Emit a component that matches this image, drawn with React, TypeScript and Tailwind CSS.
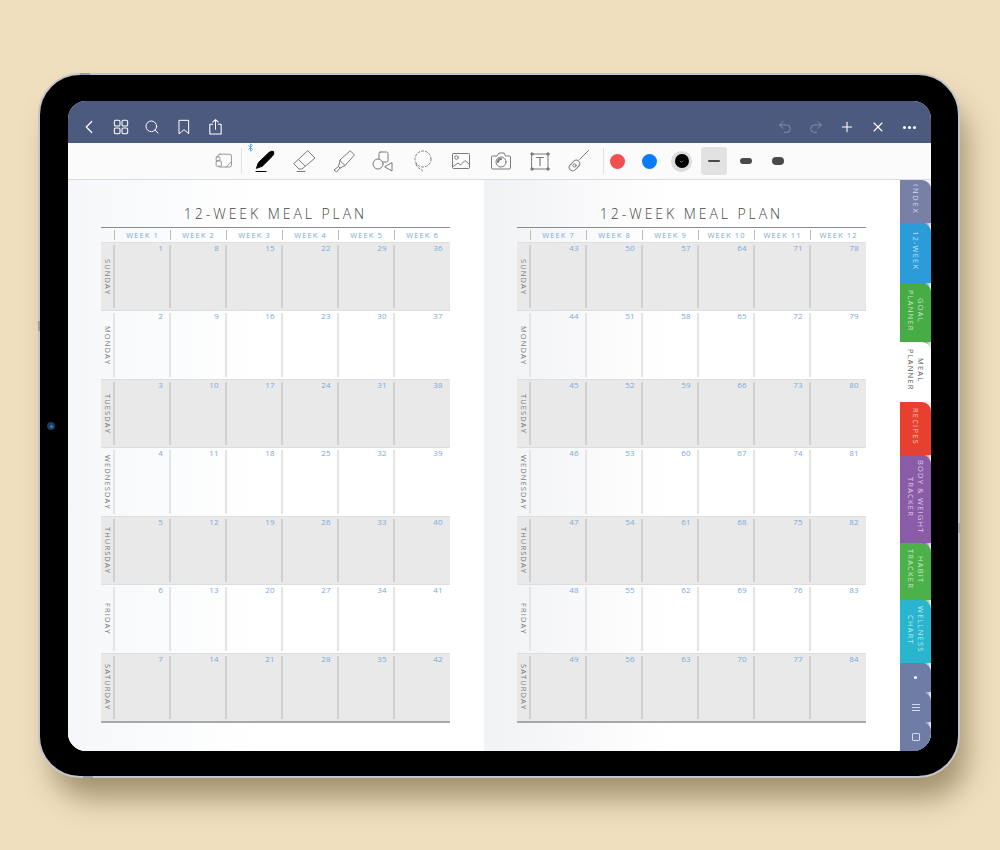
import type { ReactNode } from "react";
import { ChevronLeft, Search, Plus, X, Undo2, Redo2, Bluetooth } from "lucide-react";

const DAYS = ["SUNDAY", "MONDAY", "TUESDAY", "WEDNESDAY", "THURSDAY", "FRIDAY", "SATURDAY"];

const Ico = ({ children, className }: { children: ReactNode; className?: string }) => (
  <svg
    viewBox="0 0 24 24"
    fill="none"
    stroke="currentColor"
    strokeWidth="1"
    strokeLinecap="round"
    strokeLinejoin="round"
    className={className ?? "w-6 h-6"}
  >
    {children}
  </svg>
);

const Planner = ({ firstWeek, className }: { firstWeek: number; className: string }) => {
  const weeks = [0, 1, 2, 3, 4, 5].map((i) => firstWeek + i);
  return (
    <section className={className}>
      <h2 className="w-[349px] text-center text-[14px] leading-[20px] font-light tracking-[2.95px] text-[#444] font-['Open_Sans',sans-serif]">
        12-WEEK MEAL PLAN
      </h2>
      <div className="mt-[3px] w-[349px] border-t border-t-[#8c8c8c] border-b-2 border-b-[#a8a8a8] font-['Open_Sans',sans-serif]">
        {/* Week labels */}
        <div className="flex h-[14px] pl-[13px]">
          {weeks.map((w) => (
            <div key={w} className="w-[56px] h-full py-[2px]">
              <div className="h-full border-l border-l-[#bdbdbd] text-center text-[7.5px] leading-[10px] tracking-[1.1px] text-[#7aa9dc]">
                WEEK {w}
              </div>
            </div>
          ))}
        </div>
        {/* Day rows */}
        <div className="grid grid-rows-7 h-[479px]">
          {DAYS.map((day, d) => (
            <div
              key={day}
              className={`flex pl-[12px] relative border-t border-t-[#dedede] ${d % 2 === 0 ? "bg-[#e9e9e9]" : "bg-transparent"}`}
            >
              <div className="absolute left-0 top-0 bottom-0 w-[13px] flex items-center justify-center">
                <span className="[writing-mode:vertical-rl] text-[7.5px] leading-[10px] tracking-[1.1px] text-[#7a7a7a]">
                  {day}
                </span>
              </div>
              {weeks.map((w) => (
                <div key={w} className="w-[56px] py-[2px]">
                  <div
                    className={`h-full border-l-2 pr-[6px] text-right text-[8px] leading-[5px] tracking-[0.3px] text-[#7aa9dc] ${d % 2 === 0 ? "border-l-[#d0d0d0]" : "border-l-[#e4e4e4]"}`}
                  >
                    {(w - 1) * 7 + d + 1}
                  </div>
                </div>
              ))}
            </div>
          ))}
        </div>
      </div>
    </section>
  );
};

const TABS = [
  { label: ["INDEX"], h: "h-[43px]", bg: "bg-[#7880a8]", text: "text-[#d5d8e6] tracking-[1.8px]", prev: "from-white" },
  { label: ["12-WEEK"], h: "h-[60px]", bg: "bg-[#2b9cd8]", text: "text-[#bfe3f5]", prev: "from-[#7880a8]" },
  { label: ["GOAL", "PLANNER"], h: "h-[59px]", bg: "bg-[#47ab46]", text: "text-[#c6e8c5]", prev: "from-[#2b9cd8]" },
  { label: ["MEAL", "PLANNER"], h: "h-[60px]", bg: "bg-white", text: "text-[#555]", prev: "from-[#47ab46]" },
  { label: ["RECIPES"], h: "h-[53px]", bg: "bg-[#e8402f]", text: "text-[#f8c6bf]", prev: "from-white" },
  { label: ["BODY & WEIGHT", "TRACKER"], h: "h-[88px]", bg: "bg-[#8a5ca8]", text: "text-[#dccbe6]", prev: "from-[#e8402f]" },
  { label: ["HABIT", "TRACKER"], h: "h-[57px]", bg: "bg-[#4cb14a]", text: "text-[#c9eac8]", prev: "from-[#8a5ca8]" },
  { label: ["WELLNESS", "CHART"], h: "h-[63px]", bg: "bg-[#2ab5cf]", text: "text-[#bfeaf2]", prev: "from-[#4cb14a]" },
];

// Each tab sits on the one above it: the rounded corner shows the previous colour, fading pale at the edge
const TabShell = ({ h, bg, prev, children }: { h: string; bg: string; prev: string; children: ReactNode }) => (
  <div className={`w-[31px] bg-gradient-to-r ${prev} from-[78%] to-[#f0f0f0] ${h}`}>
    <div className={`h-full flex items-center justify-center rounded-tr-[9px] ${bg}`}>{children}</div>
  </div>
);

export default function App() {
  return (
    <div className="w-[1000px] h-[850px] bg-[#efdfbf] pl-[38px] pt-[73px] overflow-hidden">
      <div className="relative w-[922px] h-[705px] rounded-[42px] border-2 border-[#c3c5cc] bg-black pl-[28px] pt-[26px] shadow-[10px_24px_28px_-4px_rgba(90,70,30,0.5)]">
        {/* Camera and side buttons */}
        <div className="absolute left-[7px] top-[347px] w-[8px] h-[8px] rounded-full bg-[#1c3d60] flex items-center justify-center">
          <div className="w-[3px] h-[3px] rounded-full bg-[#3d7ab0]" />
        </div>
        <div className="absolute -left-[2px] top-[246px] w-[2px] h-[10px] bg-[#9a9ca3]" />
        <div className="absolute -right-[2px] top-[448px] w-[2px] h-[10px] bg-[#a5a7ae]" />
        <div className="absolute left-[40px] -top-[2px] w-[10px] h-[2px] bg-[#9a9ca3]" />
        <div className="absolute left-[43px] -bottom-[2px] w-[10px] h-[2px] bg-[#9a9ca3]" />

        <div className="w-[863px] h-[650px] rounded-[18px] overflow-hidden bg-white">
          {/* Nav bar */}
          <header className="h-[42px] bg-[#4d5a80] flex items-center text-white pt-[10px]">
            <ChevronLeft className="ml-[10px] w-[22px] h-[22px]" strokeWidth={1.3} />
            <Ico className="ml-[13px] w-[16px] h-[16px]">
              <rect x="2" y="2" width="8.5" height="8.5" rx="2" strokeWidth="1.6" />
              <rect x="13.5" y="2" width="8.5" height="8.5" rx="2" strokeWidth="1.6" />
              <rect x="2" y="13.5" width="8.5" height="8.5" rx="2" strokeWidth="1.6" />
              <rect x="13.5" y="13.5" width="8.5" height="8.5" rx="2" strokeWidth="1.6" />
            </Ico>
            <Search className="ml-[15px] w-[16px] h-[16px]" strokeWidth={1.5} />
            <Ico className="ml-[16px] w-[16px] h-[18px]">
              <path d="M5 2 H19 V22 L12 16 L5 22 Z" strokeWidth="1.5" />
            </Ico>
            <Ico className="ml-[15px] w-[17px] h-[18px]">
              <path d="M8 8 H4 V22 H20 V8 H16 M12 15 V1.5 M8 5 L12 1.5 L16 5" strokeWidth="1.5" />
            </Ico>
            <div className="ml-auto flex items-center mr-[14px] gap-[15px]">
              <Undo2 className="w-[16px] h-[16px] text-[#8b95b0]" strokeWidth={1.3} />
              <Redo2 className="w-[16px] h-[16px] text-[#8b95b0]" strokeWidth={1.3} />
              <Plus className="w-[16px] h-[16px]" strokeWidth={1.6} />
              <X className="w-[16px] h-[16px]" strokeWidth={1.6} />
              <div className="flex gap-[2px] w-[16px] justify-center">
                <span className="w-[3px] h-[3px] rounded-full bg-white" />
                <span className="w-[3px] h-[3px] rounded-full bg-white" />
                <span className="w-[3px] h-[3px] rounded-full bg-white" />
              </div>
            </div>
          </header>

          {/* Tool bar */}
          <div className="h-[37px] bg-[#fbfbfb] border-b border-b-[#dcdcdc] flex items-center text-[#7b7b7b] pl-[147px]">
            <Ico className="w-[18px] h-[18px]">
              <rect x="4" y="3" width="18" height="17" rx="2.5" />
              <rect x="1.5" y="6.5" width="5" height="5.5" rx="1" fill="#fbfbfb" />
              <rect x="1.5" y="12" width="7" height="7" rx="1" fill="#fbfbfb" />
              <path d="M15 20 L22 13" />
            </Ico>
            <div className="ml-[8px] w-px h-[26px] bg-[#e2e2e2]" />
            <div className="relative ml-[10px] w-[24px] h-[24px] text-black">
              <Bluetooth className="absolute -left-[6px] -top-[6px] w-[9px] h-[9px] text-[#3d8fd9]" strokeWidth={2} />
              <Ico>
                <path d="M4.5 19 L6.5 13.5 L17 3.5 Q19.5 1.5 21.5 2.5 Q22.5 4.5 20.5 7 L10.5 17 Z" fill="currentColor" />
                <path d="M4 22.5 H14" strokeWidth="1.2" />
              </Ico>
            </div>
            <div className="ml-[16px]">
              <Ico>
                <path d="M16 2 L23 9 L10 20 L7 20 L2 15 Z" />
                <path d="M6.5 10.5 L13 17" />
                <path d="M5 22.5 H13" />
              </Ico>
            </div>
            <div className="ml-[16px]">
              <Ico>
                <path d="M18.5 2 L22.5 6 L13 16.5 L8 11.5 Z" />
                <path d="M8 11.5 L6.5 17.5 L2 21 L4.5 23 L8 19 L13 16.5" />
                <path d="M6.5 17.5 L8 19" />
              </Ico>
            </div>
            <div className="ml-[14px]">
              <Ico>
                <rect x="9" y="3" width="9" height="10" rx="1.5" />
                <circle cx="8" cy="15" r="5" fill="#fbfbfb" />
                <path d="M22 14 V22 L15 18 Z" fill="#fbfbfb" />
              </Ico>
            </div>
            <div className="ml-[16px]">
              <Ico>
                <circle cx="13" cy="10" r="8" strokeDasharray="2 2" />
                <path d="M6 15 Q7 19 11 20 Q13 21 12 23" strokeDasharray="2 2" />
              </Ico>
            </div>
            <div className="ml-[15px]">
              <Ico>
                <rect x="3.5" y="4.5" width="17" height="15" rx="1" />
                <circle cx="7.5" cy="8.5" r="1.8" />
                <path d="M4 17.5 L9 14 L11.5 16 L16 11.5 L20 15" />
              </Ico>
            </div>
            <div className="ml-[16px]">
              <Ico>
                <path d="M3.5 20 Q2.5 20 2.5 19 V8 Q2.5 7 3.5 7 H8 L10 4 H15 L16.5 7 H20.5 Q21.5 7 21.5 8 V19 Q21.5 20 20.5 20 Z" />
                <circle cx="12" cy="13" r="5" />
                <path d="M9 13 Q9 10 12 10" strokeWidth="2" />
              </Ico>
            </div>
            <div className="ml-[15px]">
              <Ico>
                <rect x="4" y="5" width="16" height="15" />
                <circle cx="4" cy="5" r="1.2" fill="currentColor" />
                <circle cx="20" cy="5" r="1.2" fill="currentColor" />
                <circle cx="4" cy="20" r="1.2" fill="currentColor" />
                <circle cx="20" cy="20" r="1.2" fill="currentColor" />
                <path d="M8.5 8.5 H15.5 M12 8.5 V16.5" strokeWidth="1.2" />
              </Ico>
            </div>
            <div className="ml-[14px]">
              <Ico>
                <rect x="2.5" y="13" width="12" height="7" rx="3.5" transform="rotate(-45 8.5 16.5)" />
                <circle cx="8.5" cy="16.5" r="1.6" />
                <path d="M13.5 10.5 L22.5 1.5" />
              </Ico>
            </div>
            <div className="ml-[13px] w-px h-[26px] bg-[#e2e2e2]" />
            <div className="ml-[6px] w-[15px] h-[15px] rounded-full bg-[#f25050]" />
            <div className="ml-[17px] w-[15px] h-[15px] rounded-full bg-[#0a7cf5]" />
            <div className="ml-[14px] w-[21px] h-[21px] rounded-full bg-[#dcdcdc] flex items-center justify-center">
              <div className="w-[14px] h-[14px] rounded-full bg-black flex items-center justify-center">
                <svg viewBox="0 0 6 4" className="w-[5px] h-[3px]" fill="none" stroke="#bbb" strokeWidth="1">
                  <path d="M1 1 L3 3 L5 1" />
                </svg>
              </div>
            </div>
            <div className="ml-[9px] w-[26px] h-[28px] rounded-[3px] bg-[#e2e2e2] flex items-center justify-center">
              <div className="w-[12px] h-[2px] rounded-full bg-[#4a4a4a]" />
            </div>
            <div className="ml-[13px] w-[12px] h-[6px] rounded-full bg-[#4a4a4a]" />
            <div className="ml-[20px] w-[12px] h-[8px] rounded-full bg-[#4a4a4a]" />
          </div>

          {/* Pages and tabs */}
          <div className="flex h-[571px]">
            <Planner firstWeek={1} className="w-[416px] pl-[33px] pt-[24px] bg-gradient-to-r from-[#f5f7fa] to-white to-[45%]" />
            <Planner firstWeek={7} className="w-[416px] pl-[33px] pt-[24px] bg-gradient-to-r from-[#f1f2f5] to-white to-[45%]" />
            <div className="w-[31px] flex flex-col">
              {TABS.map((t) => (
                <TabShell key={t.label.join(" ")} h={t.h} bg={t.bg} prev={t.prev}>
                  <span className={`mb-[4px] [writing-mode:vertical-rl] text-center text-[7.5px] leading-[10px] tracking-[1.2px] font-['Open_Sans',sans-serif] ${t.text}`}>
                    {t.label.map((l) => (
                      <span key={l} className="block">{l}</span>
                    ))}
                  </span>
                </TabShell>
              ))}
              <TabShell h="h-[29px]" bg="bg-[#6f7ca6]" prev="from-[#2ab5cf]">
                <span className="w-[3px] h-[3px] rounded-full bg-white" />
              </TabShell>
              <TabShell h="h-[30px]" bg="bg-[#6f7ca6]" prev="from-[#6f7ca6]">
                <span className="w-[8px] flex flex-col gap-[2px]">
                  <span className="h-px bg-[#d5d8e6]" />
                  <span className="h-px bg-[#d5d8e6]" />
                  <span className="h-px bg-[#d5d8e6]" />
                </span>
              </TabShell>
              <TabShell h="h-[29px]" bg="bg-[#6f7ca6]" prev="from-[#6f7ca6]">
                <span className="w-[8px] h-[8px] border border-[#d5d8e6] rounded-[1px]" />
              </TabShell>
            </div>
          </div>
        </div>
      </div>
    </div>
  );
}
